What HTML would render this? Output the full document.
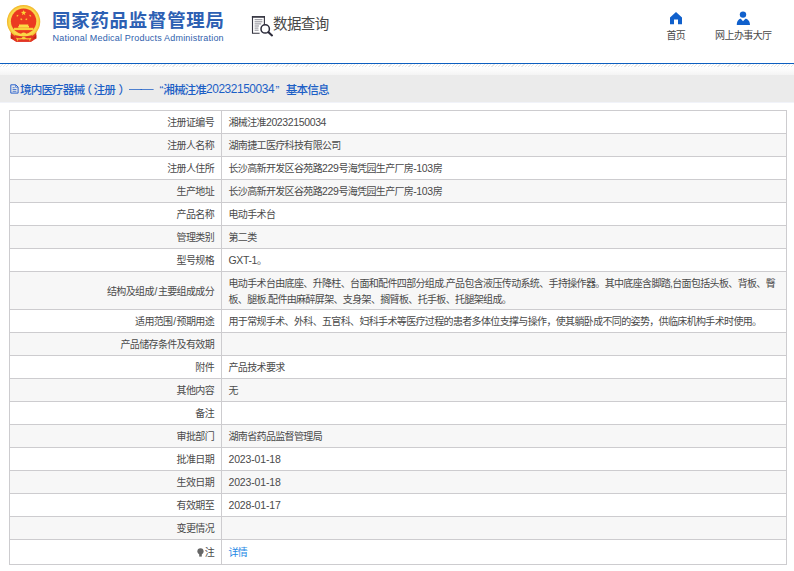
<!DOCTYPE html>
<html lang="zh-CN">
<head>
<meta charset="utf-8">
<title>国家药品监督管理局 数据查询</title>
<style>
html,body{margin:0;padding:0;}
body{width:794px;height:571px;position:relative;overflow:hidden;background:#fff;
  font-family:"Liberation Sans","Noto Sans CJK SC",sans-serif;color:#4a4a4a;}
.abs{position:absolute;}
#hdr{left:0;top:0;width:794px;height:63px;background:#fff;}
#blueline{left:0;top:63px;width:794px;height:1px;background:#0d5fc0;}
#hatch{left:0;top:64px;width:794px;height:3px;background:repeating-linear-gradient(135deg,#fff 0,#fff 1.5px,#e2e2e2 1.5px,#e2e2e2 2.3px,#fff 2.3px,#fff 2.35px);opacity:.85;}
#fade{left:0;top:67px;width:794px;height:8px;background:linear-gradient(#fff,#f4f4f4);}
#bar{left:0;top:75px;width:794px;height:27px;background:#ebebeb;}
#bartxt{left:20px;top:76px;height:27px;line-height:27px;font-size:11.6px;font-weight:500;color:#1c5fc6;white-space:nowrap;letter-spacing:-0.9px;}
#bartxt span{top:0;}
#bartxt .tn{font-size:11.9px;letter-spacing:-0.42px;}
#logotxt{left:52px;top:8px;font-size:18.4px;line-height:26px;font-weight:700;color:#2d60b3;white-space:nowrap;letter-spacing:0.8px;}
#logoen{left:52.6px;top:32px;font-size:9px;line-height:12px;color:#2f61ad;white-space:nowrap;letter-spacing:0.19px;}
#sj{left:273px;top:14px;font-size:14.5px;line-height:20px;color:#484848;white-space:nowrap;letter-spacing:-0.6px;}
.nav{font-size:10px;letter-spacing:-0.6px;line-height:12px;color:#484848;white-space:nowrap;text-align:center;}
table{border-collapse:collapse;table-layout:fixed;position:absolute;left:9px;top:110px;width:778px;font-size:10px;letter-spacing:-0.65px;}
.n{letter-spacing:-0.37px;font-size:10.5px;}
td{border:1px solid #cdcccf;height:20px;padding-top:2px;padding-bottom:0;line-height:15.6px;vertical-align:middle;}
td.l{width:204px;text-align:right;padding-left:0;padding-right:7px;}
td.v{padding-left:6.5px;padding-right:6px;text-align:left;}
tr:nth-child(even) td{background:#f7f7f7;}
tr.last td{height:20px;padding-top:2.5px;padding-bottom:1.5px;}
.d{letter-spacing:-0.16px;}
.s{letter-spacing:0;margin:0 .7px;}
a{color:#1e88e5;text-decoration:none;}
</style>
</head>
<body>
<div id="hdr" class="abs">
  <svg class="abs" style="left:4px;top:2px;filter:blur(.35px)" width="40" height="44" viewBox="0 0 40 44">
    <defs><radialGradient id="gr" cx="50%" cy="50%" r="50%"><stop offset="0.74" stop-color="#f9d348"/><stop offset="0.86" stop-color="#fbd94f"/><stop offset="1" stop-color="#f1b323"/></radialGradient></defs>
    <path d="M6.8 29 H32.3 V36.6 L27 39.7 H12.2 L6.8 36.6Z" fill="#e03423"/>
    <path d="M6.8 33 L10.5 36.5 L6.8 36.6Z M32.3 33 L28.6 36.5 L32.3 36.6Z" fill="#c12616"/>
    <circle cx="19.6" cy="19.75" r="16.65" fill="url(#gr)"/>
    <circle cx="19.6" cy="19.2" r="12.65" fill="#eb3a21"/>
    <polygon points="19.65,7.90 20.33,9.86 22.41,9.90 20.75,11.16 21.35,13.15 19.65,11.96 17.95,13.15 18.55,11.16 16.89,9.90 18.97,9.86" fill="#fcd535"/><polygon points="14.18,12.53 13.99,13.48 14.82,13.98 13.86,14.10 13.64,15.04 13.23,14.17 12.27,14.25 12.97,13.59 12.60,12.70 13.44,13.16" fill="#fcd535"/><polygon points="25.52,12.53 26.26,13.16 27.10,12.70 26.73,13.59 27.43,14.25 26.47,14.17 26.06,15.04 25.84,14.10 24.88,13.98 25.71,13.48" fill="#fcd535"/><polygon points="17.76,16.03 17.75,17.00 18.65,17.35 17.73,17.63 17.67,18.60 17.12,17.81 16.18,18.05 16.76,17.28 16.24,16.47 17.15,16.78" fill="#fcd535"/><polygon points="21.89,16.03 22.50,16.78 23.41,16.47 22.89,17.28 23.47,18.05 22.53,17.81 21.98,18.60 21.92,17.63 21.00,17.35 21.90,17.00" fill="#fcd535"/>
    <path d="M15 22.4 H24.3 V23.9 H25 V25.8 H14.3 V23.9 H15Z" fill="#fbd944"/>
    <path d="M10 25.8 H29.3 V28.1 H10Z" fill="#f9cf3a"/>
    <ellipse cx="19.7" cy="32.3" rx="2.6" ry="1.8" fill="#fbd743"/>
    <path d="M11 33.3 Q19.6 35.5 28.2 33.3 L29.6 37.7 L27 39.7 H12.2 L9.6 37.7Z" fill="#e23524"/>
    <path d="M12.2 35.7 Q16 36.9 19.6 35.6 Q23.4 36.9 27.2 35.7 L27.2 36.8 Q23.4 38 19.6 36.7 Q16 38 12.2 36.8Z" fill="#f6c733"/>
    <ellipse cx="19.7" cy="36.3" rx="2.1" ry="1.3" fill="#f9d23f"/>
    <path d="M12.5 36.6 L14.6 36.8 L13.5 39.4Z M24.8 36.8 L26.9 36.6 L25.9 39.4Z" fill="#f2c02f"/>
  </svg>
  <div id="logotxt" class="abs">国家药品监督管理局</div>
  <div id="logoen" class="abs">National Medical Products Administration</div>
  <svg class="abs" style="left:250px;top:15px" width="26" height="24" viewBox="0 0 26 24" fill="none" stroke="#33333f" stroke-width="1.2">
    <path d="M2.5 1.3 V18.2 H9.6" stroke-width="1.1"/>
    <path d="M14.4 1.6 V9.4" stroke-width="1.1"/>
    <path d="M1.9 1.9 H15" stroke-width="1.7"/>
    <path d="M4.6 4.7 H12.4 M4.6 6.8 H12.4 M4.6 8.9 H11.2 M4.6 11 H9 M4.6 13.1 H8.4 M4.6 15.2 H8.6" stroke="#85858e" stroke-width=".95"/>
    <circle cx="15.2" cy="13.9" r="4.2" stroke-width="1.5" stroke="#2b2b3a"/>
    <path d="M18.5 17.2 L22 20.4" stroke-width="2.1" stroke-linecap="round" stroke="#2b2b3a"/>
  </svg>
  <div id="sj" class="abs">数据查询</div>
  <svg class="abs" style="left:669.3px;top:10.9px" width="14" height="14" viewBox="0 0 14 14">
    <path d="M7 1 L13 6.4 V13.2 H9 V8.6 H5 V13.2 H1 V6.4Z" fill="#1060cc"/>
  </svg>
  <div class="abs nav" style="left:655.8px;top:30.4px;width:40px;">首页</div>
  <svg class="abs" style="left:735.3px;top:10.8px" width="16" height="14" viewBox="0 0 16 14">
    <circle cx="8" cy="3.6" r="3.2" fill="#1060cc"/>
    <path d="M1.8 14 C1.8 9.5 4.4 7.8 5.8 7.8 L8 10.2 L10.4 7.8 C12 7.8 15 9.5 15 14Z" fill="#1060cc"/>
  </svg>
  <div class="abs nav" style="left:703.3px;top:30.4px;width:80px;">网上办事大厅</div>
</div>
<div id="blueline" class="abs"></div>
<div id="hatch" class="abs"></div>
<div id="fade" class="abs"></div>
<div id="bar" class="abs"></div>
<div class="abs" style="left:0;top:102px;width:794px;height:1px;background:#f1f3f9"></div>
<svg class="abs" style="left:10px;top:84px" width="9" height="10" viewBox="0 0 9 10" fill="none" stroke="#2a62cc" stroke-width="1">
  <path d="M0.8 0.8 H5.8 L8.1 3.1 V9.1 H0.8Z"/><path d="M5.6 1 V3.3 H7.9" stroke-width=".7"/><path d="M2.6 3.7 H4.7 M2.6 5.5 H6.4 M2.6 7.3 H6.4" stroke-width=".8"/>
</svg>
<div id="bartxt" class="abs"><span class="abs" style="left:0">境内医疗器械</span><span class="abs" style="left:60.6px">（</span><span class="abs" style="left:73.5px">注册</span><span class="abs" style="left:98.6px">）</span><span class="abs" style="left:109.3px;top:-2px;letter-spacing:-1.5px;transform:scaleX(1.13);transform-origin:0 50%">——</span><span class="abs" style="left:139.4px">“</span><span class="abs" style="left:143.2px">湘械注准</span><span class="abs tn" style="left:186px">20232150034</span><span class="abs" style="left:255.4px">”</span><span class="abs" style="left:265.8px">基本信息</span></div>

<table>
<tr><td class="l">注册证编号</td><td class="v">湘械注准<span class="n">20232150034</span></td></tr>
<tr><td class="l">注册人名称</td><td class="v">湖南捷工医疗科技有限公司</td></tr>
<tr><td class="l">注册人住所</td><td class="v">长沙高新开发区谷苑路<span class="n">229</span>号海凭园生产厂房<span class="n">-103</span>房</td></tr>
<tr><td class="l">生产地址</td><td class="v">长沙高新开发区谷苑路<span class="n">229</span>号海凭园生产厂房<span class="n">-103</span>房</td></tr>
<tr><td class="l">产品名称</td><td class="v">电动手术台</td></tr>
<tr><td class="l">管理类别</td><td class="v">第二类</td></tr>
<tr><td class="l">型号规格</td><td class="v"><span class="n">GXT-1</span>。</td></tr>
<tr><td class="l" style="height:35px">结构及组成<span class="s">/</span>主要组成成分</td><td class="v">电动手术台由底座、升降柱、台面和配件四部分组成.产品包含液压传动系统、手持操作器。其中底座含脚踏,台面包括头板、背板、臀板、腿板.配件由麻醉屏架、支身架、搁臂板、托手板、托腿架组成。</td></tr>
<tr><td class="l">适用范围<span class="s">/</span>预期用途</td><td class="v">用于常规手术、外科、五官科、妇科手术等医疗过程的患者多体位支撑与操作，使其躺卧成不同的姿势，供临床机构手术时使用。</td></tr>
<tr><td class="l">产品储存条件及有效期</td><td class="v"></td></tr>
<tr><td class="l">附件</td><td class="v">产品技术要求</td></tr>
<tr><td class="l">其他内容</td><td class="v">无</td></tr>
<tr><td class="l">备注</td><td class="v"></td></tr>
<tr><td class="l">审批部门</td><td class="v">湖南省药品监督管理局</td></tr>
<tr><td class="l">批准日期</td><td class="v"><span class="n d">2023-01-18</span></td></tr>
<tr><td class="l">生效日期</td><td class="v"><span class="n d">2023-01-18</span></td></tr>
<tr><td class="l">有效期至</td><td class="v"><span class="n d">2028-01-17</span></td></tr>
<tr><td class="l">变更情况</td><td class="v"></td></tr>
<tr class="last"><td class="l"><svg width="7" height="9" viewBox="0 0 7 9" style="vertical-align:-1px;margin-right:1px"><circle cx="3.5" cy="3.3" r="3.1" fill="#666"/><rect x="2.2" y="6" width="2.6" height="2.6" fill="#666"/></svg>注</td><td class="v"><a>详情</a></td></tr>
</table>
</body>
</html>
